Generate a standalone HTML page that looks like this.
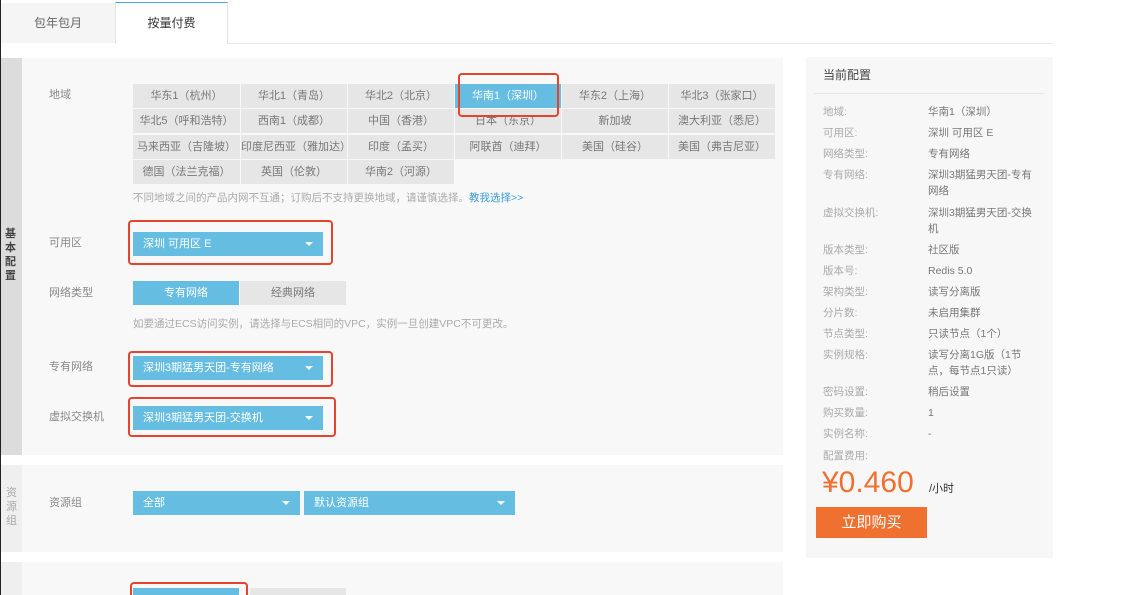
<!DOCTYPE html>
<html><head><meta charset="utf-8"><style>
*{margin:0;padding:0;box-sizing:border-box}
html,body{width:1132px;height:595px;overflow:hidden}
body{background:#fff;font-family:"Liberation Sans","Noto Sans CJK SC",sans-serif;font-size:11px;color:#888;position:relative;line-height:1.2}
.a{position:absolute}
.cell{position:absolute;background:#e6e6e6;color:#777;text-align:center;height:24px;line-height:24px;font-size:11px;white-space:nowrap;overflow:hidden}
.sel{background:#65bde2;color:#fff}
.dd{position:absolute;background:#65bde2;color:#fff;height:24px;line-height:24px;padding-left:10px;font-size:11px}
.dd:after{content:"";position:absolute;right:10px;top:10px;border-left:4px solid transparent;border-right:4px solid transparent;border-top:4px solid #fff}
.red{position:absolute;border:2px solid #e8432e;border-radius:4px}
.lbl{position:absolute;left:49px;color:#888;font-size:11px}
.rl{position:absolute;left:823px;color:#aaa;font-size:10.5px}
.rv{position:absolute;left:928px;color:#777;font-size:10.5px;width:110px;line-height:16px}
</style></head><body>
<div class="a" style="left:0;top:0;width:1px;height:595px;background:#222"></div>
<div class="a" style="left:1px;top:3px;width:114px;height:40px;background:#f5f5f5;text-align:center;line-height:40px;font-size:12px;color:#666">包年包月</div>
<div class="a" style="left:115px;top:2px;width:113px;height:42px;background:#fff;border-top:1px solid #4fa6d8;border-left:1px solid #e6e6e6;border-right:1px solid #e6e6e6;text-align:center;line-height:40px;font-size:12px;color:#333">按量付费</div>
<div class="a" style="left:228px;top:43px;width:825px;height:1px;background:#e6e6e6"></div>
<div class="a" style="left:1px;top:58px;width:782px;height:397px;background:#f8f8f8"></div>
<div class="a" style="left:1px;top:58px;width:21px;height:397px;background:#dcdcdc"></div>
<div class="a" style="left:5px;top:227px;width:13px;font-size:11px;line-height:14px;color:#444;font-weight:bold">基本配置</div>
<div class="lbl" style="top:89px">地域</div>
<div class="cell" style="left:133px;top:84px;width:107px">华东1（杭州）</div>
<div class="cell" style="left:241px;top:84px;width:106px">华北1（青岛）</div>
<div class="cell" style="left:348px;top:84px;width:106px">华北2（北京）</div>
<div class="cell sel" style="left:455px;top:84px;width:106px">华南1（深圳）</div>
<div class="cell" style="left:562px;top:84px;width:106px">华东2（上海）</div>
<div class="cell" style="left:669px;top:84px;width:106px">华北3（张家口）</div>
<div class="cell" style="left:133px;top:109px;width:107px">华北5（呼和浩特）</div>
<div class="cell" style="left:241px;top:109px;width:106px">西南1（成都）</div>
<div class="cell" style="left:348px;top:109px;width:106px">中国（香港）</div>
<div class="cell" style="left:455px;top:109px;width:106px">日本（东京）</div>
<div class="cell" style="left:562px;top:109px;width:106px">新加坡</div>
<div class="cell" style="left:669px;top:109px;width:106px">澳大利亚（悉尼）</div>
<div class="cell" style="left:133px;top:135px;width:107px">马来西亚（吉隆坡）</div>
<div class="cell" style="left:241px;top:135px;width:106px">印度尼西亚（雅加达）</div>
<div class="cell" style="left:348px;top:135px;width:106px">印度（孟买）</div>
<div class="cell" style="left:455px;top:135px;width:106px">阿联酋（迪拜）</div>
<div class="cell" style="left:562px;top:135px;width:106px">美国（硅谷）</div>
<div class="cell" style="left:669px;top:135px;width:106px">美国（弗吉尼亚）</div>
<div class="cell" style="left:133px;top:160px;width:107px">德国（法兰克福）</div>
<div class="cell" style="left:241px;top:160px;width:106px">英国（伦敦）</div>
<div class="cell" style="left:348px;top:160px;width:106px">华南2（河源）</div>
<div class="red" style="left:458px;top:73px;width:101px;height:44px"></div>
<div class="a" style="left:133px;top:192px;color:#aaa;font-size:10.5px">不同地域之间的产品内网不互通；订购后不支持更换地域，请谨慎选择。<span style="color:#3a9bd5">教我选择&gt;&gt;</span></div>
<div class="lbl" style="top:237px">可用区</div>
<div class="dd" style="left:133px;top:232px;width:190px">深圳 可用区 E</div>
<div class="red" style="left:128px;top:220px;width:205px;height:45px"></div>
<div class="lbl" style="top:287px">网络类型</div>
<div class="cell sel" style="left:133px;top:281px;width:106px">专有网络</div>
<div class="cell" style="left:240px;top:281px;width:106px">经典网络</div>
<div class="a" style="left:133px;top:318px;color:#aaa;font-size:10.5px">如要通过ECS访问实例，请选择与ECS相同的VPC，实例一旦创建VPC不可更改。</div>
<div class="lbl" style="top:361px">专有网络</div>
<div class="dd" style="left:133px;top:356px;width:190px">深圳3期猛男天团-专有网络</div>
<div class="red" style="left:128px;top:351px;width:205px;height:36px"></div>
<div class="lbl" style="top:411px">虚拟交换机</div>
<div class="dd" style="left:133px;top:406px;width:190px">深圳3期猛男天团-交换机</div>
<div class="red" style="left:128px;top:397px;width:208px;height:40px"></div>
<div class="a" style="left:1px;top:465px;width:782px;height:87px;background:#f8f8f8"></div>
<div class="a" style="left:1px;top:465px;width:21px;height:87px;background:#efefef"></div>
<div class="a" style="left:6px;top:486px;width:13px;font-size:11px;line-height:14px;color:#aaa">资源组</div>
<div class="lbl" style="top:497px">资源组</div>
<div class="dd" style="left:133px;top:491px;width:167px">全部</div>
<div class="dd" style="left:304px;top:491px;width:211px">默认资源组</div>
<div class="a" style="left:1px;top:562px;width:782px;height:33px;background:#f8f8f8"></div>
<div class="a" style="left:1px;top:562px;width:21px;height:33px;background:#efefef"></div>
<div class="cell sel" style="left:133px;top:588px;width:106px"></div>
<div class="cell" style="left:250px;top:588px;width:96px"></div>
<div class="red" style="left:130px;top:582px;width:118px;height:20px"></div>
<div class="a" style="left:806px;top:57px;width:247px;height:501px;background:#f7f7f7"></div>
<div class="a" style="left:823px;top:68px;font-size:12px;color:#444">当前配置</div>
<div class="a" style="left:814px;top:93px;width:230px;height:1px;background:#e6e6e6"></div>
<div class="rl" style="top:106px">地域:</div><div class="rv" style="top:104px">华南1（深圳）</div>
<div class="rl" style="top:127px">可用区:</div><div class="rv" style="top:125px">深圳 可用区 E</div>
<div class="rl" style="top:148px">网络类型:</div><div class="rv" style="top:146px">专有网络</div>
<div class="rl" style="top:169px">专有网络:</div><div class="rv" style="top:167px">深圳3期猛男天团-专有网络</div>
<div class="rl" style="top:207px">虚拟交换机:</div><div class="rv" style="top:205px">深圳3期猛男天团-交换机</div>
<div class="rl" style="top:244px">版本类型:</div><div class="rv" style="top:242px">社区版</div>
<div class="rl" style="top:265px">版本号:</div><div class="rv" style="top:263px">Redis 5.0</div>
<div class="rl" style="top:286px">架构类型:</div><div class="rv" style="top:284px">读写分离版</div>
<div class="rl" style="top:307px">分片数:</div><div class="rv" style="top:305px">未启用集群</div>
<div class="rl" style="top:328px">节点类型:</div><div class="rv" style="top:326px">只读节点（1个）</div>
<div class="rl" style="top:349px">实例规格:</div><div class="rv" style="top:347px">读写分离1G版（1节点，每节点1只读）</div>
<div class="rl" style="top:386px">密码设置:</div><div class="rv" style="top:384px">稍后设置</div>
<div class="rl" style="top:407px">购买数量:</div><div class="rv" style="top:405px">1</div>
<div class="rl" style="top:428px">实例名称:</div><div class="rv" style="top:426px">-</div>
<div class="rl" style="top:450px">配置费用:</div>
<div class="a" style="left:822px;top:465px;font-size:30px;color:#f07030;line-height:36px">¥0.460</div>
<div class="a" style="left:929px;top:483px;font-size:11px;color:#333">/小时</div>
<div class="a" style="left:816px;top:507px;width:111px;height:31px;background:#f07030;color:#fff;font-size:15px;text-align:center;line-height:31px">立即购买</div>
</body></html>
